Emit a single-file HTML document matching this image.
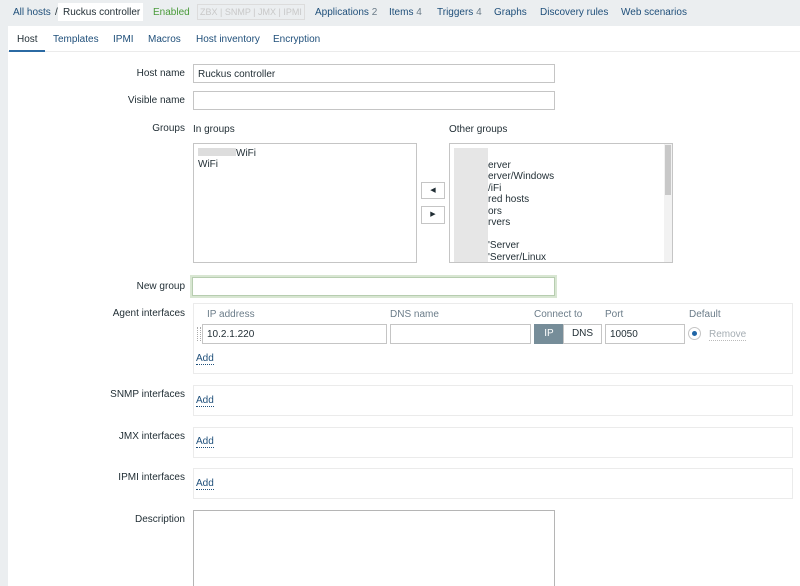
<!DOCTYPE html><html><head><style>
*{margin:0;padding:0;box-sizing:border-box}
html,body{width:800px;height:586px;overflow:hidden}
body{background:#ebeef0;font-family:"Liberation Sans",Arial,sans-serif;font-size:10px;color:#1f2c33;position:relative}
.a{position:absolute;white-space:nowrap}
.l{color:#1f4f7a}
.lb{position:absolute;right:615px;white-space:nowrap}
.in{position:absolute;background:#fff;border:1px solid #c5c5c5}
.add{position:absolute;color:#1f4f7a;border-bottom:1px dotted #1f4f7a;line-height:11px}
.box{position:absolute;left:193px;width:600px;border:1px solid #ebebeb;background:#fff}
</style></head><body>
<div class="a" style="top:26px;width:792px;height:560px;background:#fff;left:8px"></div>
<div class="a l" style="left:13px;top:7px">All hosts</div>
<div class="a" style="left:55px;top:7px">/</div>
<div class="a" style="left:58px;top:3px;width:85px;height:18px;background:#fff;padding:4px 0 0 5px">Ruckus controller</div>
<div class="a" style="left:153px;top:7px;color:#4a9b3a">Enabled</div>
<div class="a" style="left:197px;top:4px;height:16px;border:1px solid #dcdcdc;color:#c8c8c8;font-size:9px;padding:2px 2px">ZBX | SNMP | JMX | IPMI</div>
<div class="a l" style="left:315px;top:7px">Applications <span style="color:#6b7c89">2</span></div>
<div class="a l" style="left:389px;top:7px">Items <span style="color:#6b7c89">4</span></div>
<div class="a l" style="left:437px;top:7px">Triggers <span style="color:#6b7c89">4</span></div>
<div class="a l" style="left:494px;top:7px">Graphs</div>
<div class="a l" style="left:540px;top:7px">Discovery rules</div>
<div class="a l" style="left:621px;top:7px">Web scenarios</div>
<div class="a" style="left:8px;top:51px;width:792px;height:1px;background:#ebebeb"></div>
<div class="a" style="left:17px;top:34px">Host</div>
<div class="a" style="left:9px;top:50px;width:36px;height:2px;background:#2b6aa3"></div>
<div class="a l" style="left:53px;top:34px">Templates</div>
<div class="a l" style="left:113px;top:34px">IPMI</div>
<div class="a l" style="left:148px;top:34px">Macros</div>
<div class="a l" style="left:196px;top:34px">Host inventory</div>
<div class="a l" style="left:273px;top:34px">Encryption</div>

<div class="lb" style="top:68px">Host name</div>
<div class="in" style="left:193px;top:64px;width:362px;height:19px;padding:4px 4px">Ruckus controller</div>
<div class="lb" style="top:95px">Visible name</div>
<div class="in" style="left:193px;top:91px;width:362px;height:19px"></div>
<div class="lb" style="top:123px">Groups</div>
<div class="a" style="left:193px;top:124px">In groups</div>
<div class="a" style="left:449px;top:124px">Other groups</div>
<div class="in" style="left:193px;top:143px;width:224px;height:120px;padding:4px">
<div><span style="display:inline-block;width:38px;height:8px;background:#ddd"></span>WiFi</div><div>WiFi</div></div>
<div class="in" style="left:421px;top:182px;width:24px;height:17px;text-align:center;font-size:7px;line-height:15px">◀</div>
<div class="in" style="left:421px;top:206px;width:24px;height:18px;text-align:center;font-size:7px;line-height:16px">▶</div>
<div class="in" style="left:449px;top:143px;width:224px;height:120px;padding:4px 0 0 38px;line-height:11.5px;overflow:hidden">
<div class="a" style="left:4px;top:4px;width:34px;height:114px;background:#e6e6e6"></div>
<div class="a" style="right:0;top:0;width:8px;height:118px;background:#f2f2f2"></div>
<div class="a" style="right:1px;top:1px;width:6px;height:50px;background:#c8c8c8"></div>
<div>&nbsp;</div><div>erver</div><div>erver/Windows</div><div>/iFi</div><div>red hosts</div><div>ors</div><div>rvers</div><div>&nbsp;</div><div>'Server</div><div>'Server/Linux</div></div>

<div class="lb" style="top:281px">New group</div>
<div class="in" style="left:190px;top:275px;width:367px;height:23px;border:3px solid #d8e6d2;outline:1px solid #b7cdb0;outline-offset:-3px"></div>

<div class="lb" style="top:308px">Agent interfaces</div>
<div class="box" style="top:303px;height:71px"></div>
<div class="a" style="left:207px;top:309px;color:#6b7c89">IP address</div>
<div class="a" style="left:390px;top:309px;color:#6b7c89">DNS name</div>
<div class="a" style="left:534px;top:309px;color:#6b7c89">Connect to</div>
<div class="a" style="left:605px;top:309px;color:#6b7c89">Port</div>
<div class="a" style="left:689px;top:309px;color:#6b7c89">Default</div>
<div class="a" style="left:197px;top:327px;width:4px;height:14px;border-left:1px dotted #aaa;border-right:1px dotted #aaa"></div>
<div class="in" style="left:202px;top:324px;width:185px;height:20px;padding:4px 4px">10.2.1.220</div>
<div class="in" style="left:390px;top:324px;width:141px;height:20px"></div>
<div class="a" style="left:534px;top:324px;width:30px;height:20px;background:#768d99;color:#fff;text-align:center;line-height:20px">IP</div>
<div class="in" style="left:563px;top:324px;width:39px;height:20px;text-align:center;line-height:18px">DNS</div>
<div class="in" style="left:605px;top:324px;width:80px;height:20px;padding:4px 4px">10050</div>
<div class="a" style="left:688px;top:327px;width:13px;height:13px;border-radius:50%;border:1px solid #c5c5c5;background:#fff"><div style="margin:3px;width:5px;height:5px;border-radius:50%;background:#1f65a6"></div></div>
<div class="a" style="left:709px;top:329px;color:#a5adb3;border-bottom:1px dotted #bbb;line-height:11px">Remove</div>
<div class="add" style="left:196px;top:353px">Add</div>

<div class="lb" style="top:389px">SNMP interfaces</div>
<div class="box" style="top:385px;height:31px"></div>
<div class="add" style="left:196px;top:395px">Add</div>
<div class="lb" style="top:431px">JMX interfaces</div>
<div class="box" style="top:427px;height:31px"></div>
<div class="add" style="left:196px;top:436px">Add</div>
<div class="lb" style="top:472px">IPMI interfaces</div>
<div class="box" style="top:468px;height:31px"></div>
<div class="add" style="left:196px;top:478px">Add</div>
<div class="lb" style="top:514px">Description</div>
<div class="in" style="left:193px;top:510px;width:362px;height:90px;border-color:#b5b5b5"></div>
</body></html>
